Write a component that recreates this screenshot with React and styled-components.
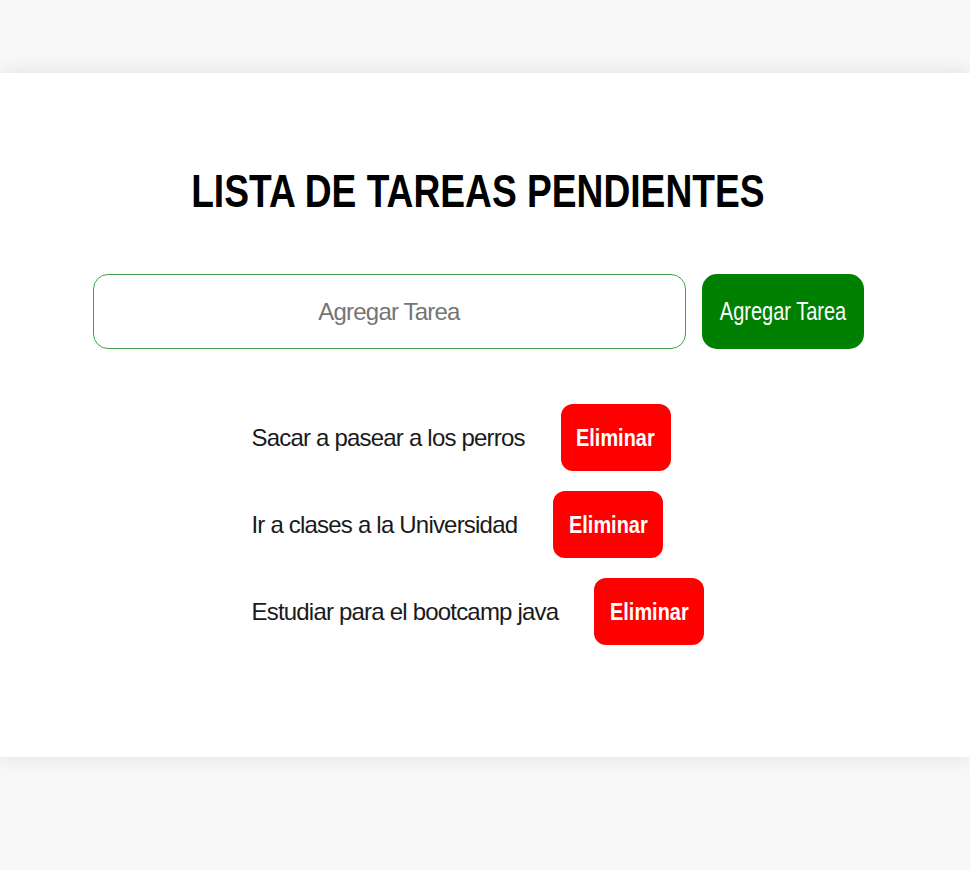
import React, { useState } from "react";
import styled, { createGlobalStyle } from "styled-components";

const GlobalStyle = createGlobalStyle`
    body {
        margin: 0;
        background-color: #f8f8f8;
        font-family: "Liberation Sans", Arial, sans-serif;
    }
`;

const initialTasks = [
    "Sacar a pasear a los perros",
    "Ir a clases a la Universidad",
    "Estudiar para el bootcamp java",
];

const App = () => {
    const [tasks, setTasks] = useState(initialTasks);
    const [text, setText] = useState("");

    const addTask = () => {
        if (!text.trim()) return;
        setTasks([...tasks, text.trim()]);
        setText("");
    };

    const removeTask = (index) => {
        setTasks(tasks.filter((_, i) => i !== index));
    };

    return (
        <>
            <GlobalStyle />
            <Page>
                <Card>
                    <Content>
                        <Title>
                            <Narrow $scale={0.808}>LISTA DE TAREAS PENDIENTES</Narrow>
                        </Title>
                        <Form>
                            <Input
                                placeholder="Agregar Tarea"
                                value={text}
                                onChange={(e) => setText(e.target.value)}
                            />
                            <AddButton onClick={addTask}>
                                <Narrow $scale={0.8}>Agregar Tarea</Narrow>
                            </AddButton>
                        </Form>
                        <List>
                            {tasks.map((task, i) => (
                                <Item key={i}>
                                    <TaskText>{task}</TaskText>
                                    <DeleteButton onClick={() => removeTask(i)}>
                                        <Narrow $scale={0.83}>Eliminar</Narrow>
                                    </DeleteButton>
                                </Item>
                            ))}
                        </List>
                    </Content>
                </Card>
            </Page>
        </>
    );
};

export default App;

const Page = styled.div`
    min-height: 870px;
    padding-top: 73px;
    box-sizing: border-box;
`;

const Card = styled.div`
    background-color: #fff;
    box-shadow: 0 0 20px rgba(0, 0, 0, 0.1);
    height: 684px;
    padding-right: 14px;
    box-sizing: border-box;
`;

const Content = styled.div`
    width: 771px;
    margin: 0 auto;
    padding-top: 100px;
    display: flex;
    flex-direction: column;
`;

// the original font is a narrow sans, so the label is squeezed around its centre
const Narrow = styled.span`
    display: inline-block;
    white-space: nowrap;
    transform: scaleX(${(p) => p.$scale});
    transform-origin: center;
`;

const Title = styled.h1`
    margin: 0;
    text-align: center;
    font-size: 46px;
    font-weight: 700;
    color: #000;
    line-height: 36px;
    white-space: nowrap;
`;

const Form = styled.div`
    display: flex;
    gap: 16px;
    margin-top: 65px;
`;

const Input = styled.input`
    flex: 1;
    height: 75px;
    box-sizing: border-box;
    border: 1px solid #43a047;
    border-radius: 15px;
    font-family: inherit;
    font-size: 24px;
    letter-spacing: -0.8px;
    text-align: center;
    outline: none;

    &::placeholder {
        color: #757575;
    }
`;

const AddButton = styled.button`
    width: 162px;
    height: 75px;
    padding: 0;
    border: none;
    border-radius: 15px;
    background-color: #008000;
    color: #fff;
    font-family: inherit;
    font-size: 25px;
    cursor: pointer;
`;

const List = styled.ul`
    list-style: none;
    margin: 55px 0 0;
    padding: 0 0 0 159px;
    display: flex;
    flex-direction: column;
    gap: 20px;
`;

const Item = styled.li`
    display: flex;
    align-items: center;
    gap: 36px;
`;

const TaskText = styled.span`
    font-size: 24px;
    letter-spacing: -0.8px;
    color: #1a1a1a;
`;

const DeleteButton = styled.button`
    width: 110px;
    height: 67px;
    padding: 0;
    border: none;
    border-radius: 12px;
    background-color: #ff0000;
    color: #fff;
    font-family: inherit;
    font-size: 24px;
    font-weight: 700;
    cursor: pointer;
`;
